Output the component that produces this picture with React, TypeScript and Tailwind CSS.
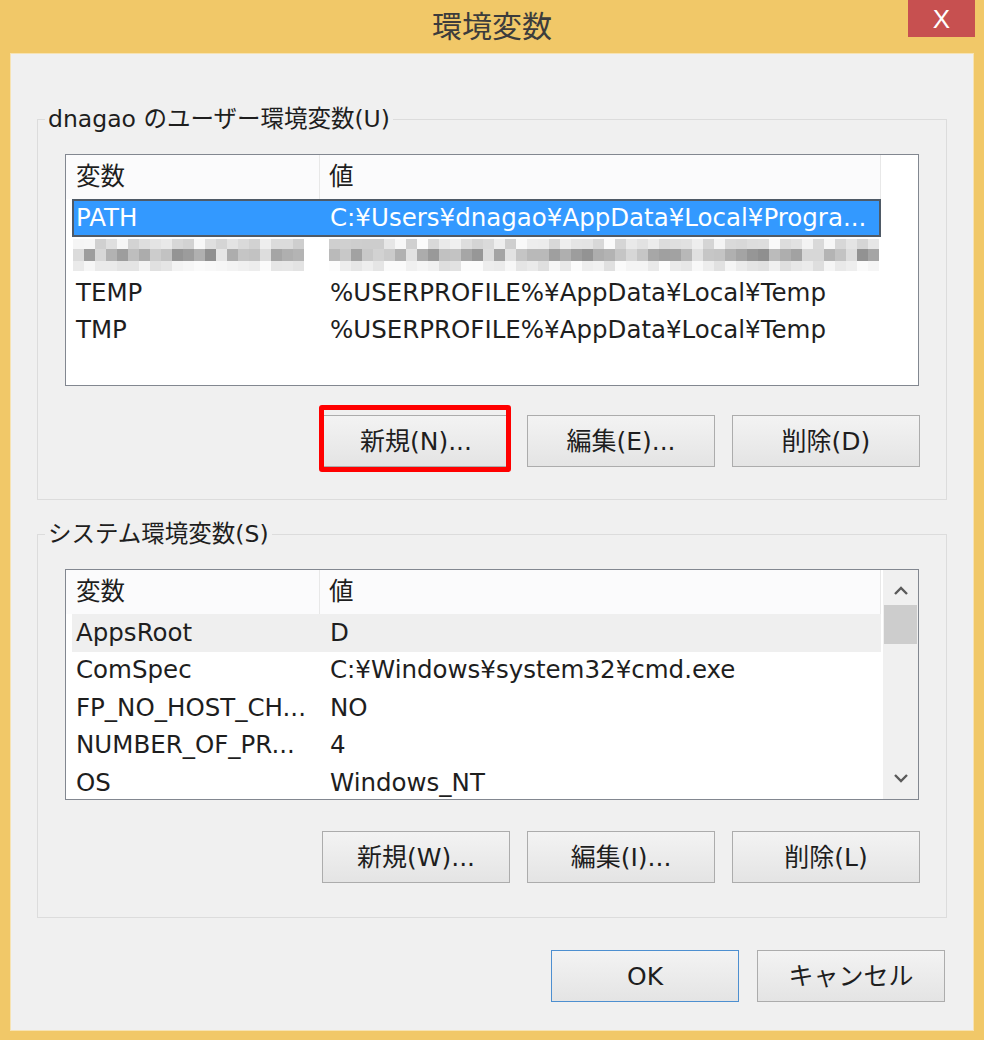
import React from 'react';

type MRow = { cls: string; base: number; range: number };

const MOSAIC_ROWS: MRow[] = [
  { cls: 'h-[10px]', base: 205, range: 45 },
  { cls: 'h-[12px]', base: 140, range: 90 },
  { cls: 'h-[10px]', base: 222, range: 30 },
];

function Mosaic({ cols, seed }: { cols: number; seed: number }) {
  let s = seed;
  const rnd = () => {
    s = (s * 9301 + 49297) % 233280;
    return s / 233280;
  };
  return (
    <div className="flex flex-col blur-[0.7px]">
      {MOSAIC_ROWS.map((r, i) => (
        <div key={i} className="flex">
          {Array.from({ length: cols }).map((_, j) => {
            const v = Math.round(r.base + rnd() * r.range);
            return (
              <div
                key={j}
                className={`w-[11px] ${r.cls}`}
                style={{ backgroundColor: `rgb(${v},${v},${v})` }}
              />
            );
          })}
        </div>
      ))}
    </div>
  );
}

function Btn({ label, primary }: { label: string; primary?: boolean }) {
  return (
    <div
      className={`w-[188px] h-[52px] flex items-center justify-center text-[25px] text-[#1e1e1e] bg-gradient-to-b from-[#f3f3f3] to-[#e4e4e4] border ${
        primary ? 'border-[#4d8fd0]' : 'border-[#acacac]'
      }`}
    >
      {label}
    </div>
  );
}

type Row = { name: string; value: string; kind?: 'sel' | 'hover' | 'blur' };

function Header({ extra }: { extra: boolean }) {
  return (
    <div className="flex h-[44px] shrink-0">
      <div className="w-[254px] pl-[10px] flex items-center bg-[#fbfbfc] border-r border-[#e8e8e8]">変数</div>
      <div className="w-[561px] pl-[9px] flex items-center bg-[#fbfbfc] border-r border-[#e8e8e8]">値</div>
      {extra && <div className="flex-1 bg-white" />}
    </div>
  );
}

function Rows({ rows }: { rows: Row[] }) {
  return (
    <div className="flex flex-col">
      {rows.map((r, i) => {
        if (r.kind === 'blur') {
          return (
            <div key={i} className="ml-[6px] w-[809px] h-[37.5px] flex items-center">
              <div className="w-[248px] pl-[1px] overflow-hidden">
                <Mosaic cols={21} seed={17} />
              </div>
              <div className="pl-[9px] overflow-hidden">
                <Mosaic cols={50} seed={71} />
              </div>
            </div>
          );
        }
        const sel = r.kind === 'sel';
        const hov = r.kind === 'hover';
        return (
          <div
            key={i}
            className={`ml-[6px] w-[809px] h-[37.5px] flex items-center ${
              sel ? 'bg-[#3399ff] text-white shadow-[inset_0_0_0_2px_#4f5a66]' : hov ? 'bg-[#efefef]' : ''
            }`}
          >
            <div className="w-[248px] pl-[4px] whitespace-nowrap">{r.name}</div>
            <div className="pl-[10px] whitespace-nowrap">{r.value}</div>
          </div>
        );
      })}
    </div>
  );
}

function Chevron({ up }: { up: boolean }) {
  return (
    <svg width="16" height="10" viewBox="0 0 16 10">
      <path
        d={up ? 'M2 8 L8 2 L14 8' : 'M2 2 L8 8 L14 2'}
        fill="none"
        stroke="#5a5a5a"
        strokeWidth="2.4"
      />
    </svg>
  );
}

export default function App() {
  const userRows: Row[] = [
    { name: 'PATH', value: 'C:¥Users¥dnagao¥AppData¥Local¥Progra...', kind: 'sel' },
    { name: '', value: '', kind: 'blur' },
    { name: 'TEMP', value: '%USERPROFILE%¥AppData¥Local¥Temp' },
    { name: 'TMP', value: '%USERPROFILE%¥AppData¥Local¥Temp' },
  ];
  const sysRows: Row[] = [
    { name: 'AppsRoot', value: 'D', kind: 'hover' },
    { name: 'ComSpec', value: 'C:¥Windows¥system32¥cmd.exe' },
    { name: 'FP_NO_HOST_CH...', value: 'NO' },
    { name: 'NUMBER_OF_PR...', value: '4' },
    { name: 'OS', value: 'Windows_NT' },
  ];

  return (
    <div className="w-[984px] h-[1040px] bg-[#f1c868] flex flex-col font-['DejaVu_Sans','Noto_Sans_CJK_JP',sans-serif] text-[#1e1e1e] text-[24.5px] leading-none overflow-hidden">
      {/* title bar */}
      <div className="h-[53px] shrink-0 relative flex justify-center pt-[8px]">
        <span className="text-[30px] text-[#3c3c3c] font-['Noto_Sans_CJK_JP',sans-serif] leading-[32px]">環境変数</span>
        <div className="absolute right-[9px] top-0 w-[67px] h-[37px] bg-[#c75050] flex items-center justify-center text-white text-[26px] font-['Liberation_Sans',sans-serif]">
          X
        </div>
      </div>

      {/* client */}
      <div className="flex-1 mx-[10px] mb-[9px] bg-[#f0f0f0] border border-[#f7e3b3] px-[26px] pt-[50px] flex flex-col">
        {/* user group */}
        <fieldset className="border border-[#dcdcdc] pl-[27px] pr-[27px] pt-[20px] pb-[32px]">
          <legend className="ml-[-20px] px-[3px] leading-[30px] text-[23.5px]">dnagao のユーザー環境変数(U)</legend>
          <div className="h-[232px] border border-[#828790] bg-white flex flex-col">
            <Header extra />
            <Rows rows={userRows} />
          </div>
          <div className="flex justify-end gap-[17px] mt-[29px] mr-[-1px]">
            <div className="relative">
              <Btn label="新規(N)..." />
              <div className="absolute left-[-3px] right-[-1px] top-[-10px] bottom-[-5px] border-[5px] border-[#ff0000] rounded-[3px]" />
            </div>
            <Btn label="編集(E)..." />
            <Btn label="削除(D)" />
          </div>
        </fieldset>

        {/* system group */}
        <fieldset className="mt-[19px] border border-[#dcdcdc] pl-[27px] pr-[27px] pt-[20px] pb-[34px]">
          <legend className="ml-[-20px] px-[3px] leading-[30px] text-[23.5px]">システム環境変数(S)</legend>
          <div className="h-[231px] border border-[#828790] bg-white flex">
            <div className="flex-1 flex flex-col">
              <Header extra={false} />
              <Rows rows={sysRows} />
            </div>
            <div className="w-[35px] bg-[#f0f0f0] flex flex-col items-center">
              <div className="h-[35px] flex items-center justify-center pt-[6px]">
                <Chevron up />
              </div>
              <div className="w-[33px] h-[39px] bg-[#cdcdcd]" />
              <div className="flex-1" />
              <div className="h-[36px] flex items-center justify-center pb-[6px]">
                <Chevron up={false} />
              </div>
            </div>
          </div>
          <div className="flex justify-end gap-[17px] mt-[31px] mr-[-1px]">
            <Btn label="新規(W)..." />
            <Btn label="編集(I)..." />
            <Btn label="削除(L)" />
          </div>
        </fieldset>

        <div className="flex justify-end gap-[18px] mt-[32px] pr-[2px]">
          <Btn label="OK" primary />
          <Btn label="キャンセル" />
        </div>
      </div>
    </div>
  );
}
